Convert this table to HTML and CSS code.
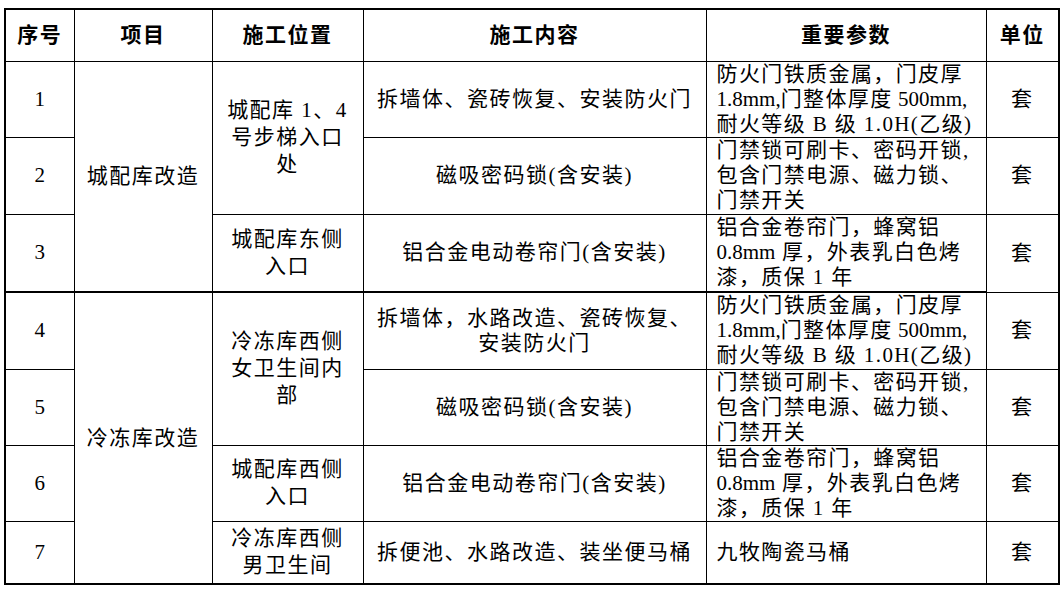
FILE: index.html
```html
<!DOCTYPE html>
<html lang="zh-CN">
<head>
<meta charset="utf-8">
<title>施工清单</title>
<link rel="stylesheet" href="styles.css">
</head>
<body>
<table class="sheet">
  <colgroup>
    <col class="c-no">
    <col class="c-item">
    <col class="c-loc">
    <col class="c-work">
    <col class="c-param">
    <col class="c-unit">
  </colgroup>
  <thead>
    <tr class="r-head">
      <th>序号</th>
      <th>项目</th>
      <th>施工位置</th>
      <th>施工内容</th>
      <th>重要参数</th>
      <th>单位</th>
    </tr>
  </thead>
  <tbody>
    <tr class="r1">
      <td class="num">1</td>
      <td rowspan="3" class="item">城配库改造</td>
      <td rowspan="2" class="loc">城配库 1、4<br>号步梯入口<br>处</td>
      <td class="work">拆墙体、瓷砖恢复、安装防火门</td>
      <td class="param">防火门铁质金属，门皮厚<br><span class="lat">1.8mm,</span>门整体厚度<span class="lat"> 500mm,</span><br>耐火等级 B 级 1.0H(乙级)</td>
      <td class="unit">套</td>
    </tr>
    <tr class="r2">
      <td class="num">2</td>
      <td class="work">磁吸密码锁(含安装)</td>
      <td class="param">门禁锁可刷卡、密码开锁,<br>包含门禁电源、磁力锁、<br>门禁开关</td>
      <td class="unit">套</td>
    </tr>
    <tr class="r3">
      <td class="num">3</td>
      <td class="loc">城配库东侧<br>入口</td>
      <td class="work">铝合金电动卷帘门(含安装)</td>
      <td class="param">铝合金卷帘门，蜂窝铝<br><span class="lat">0.8mm</span> 厚，外表乳白色烤<br>漆，质保 1 年</td>
      <td class="unit">套</td>
    </tr>
    <tr class="r4 split">
      <td class="num">4</td>
      <td rowspan="4" class="item">冷冻库改造</td>
      <td rowspan="2" class="loc">冷冻库西侧<br>女卫生间内<br>部</td>
      <td class="work">拆墙体，水路改造、瓷砖恢复、<br>安装防火门</td>
      <td class="param">防火门铁质金属，门皮厚<br><span class="lat">1.8mm,</span>门整体厚度<span class="lat"> 500mm,</span><br>耐火等级 B 级 1.0H(乙级)</td>
      <td class="unit thin">套</td>
    </tr>
    <tr class="r5">
      <td class="num">5</td>
      <td class="work">磁吸密码锁(含安装)</td>
      <td class="param">门禁锁可刷卡、密码开锁,<br>包含门禁电源、磁力锁、<br>门禁开关</td>
      <td class="unit">套</td>
    </tr>
    <tr class="r6">
      <td class="num">6</td>
      <td class="loc">城配库西侧<br>入口</td>
      <td class="work">铝合金电动卷帘门(含安装)</td>
      <td class="param">铝合金卷帘门，蜂窝铝<br><span class="lat">0.8mm</span> 厚，外表乳白色烤<br>漆，质保 1 年</td>
      <td class="unit">套</td>
    </tr>
    <tr class="r7">
      <td class="num">7</td>
      <td class="loc">冷冻库西侧<br>男卫生间</td>
      <td class="work">拆便池、水路改造、装坐便马桶</td>
      <td class="param">九牧陶瓷马桶</td>
      <td class="unit">套</td>
    </tr>
  </tbody>
</table>
</body>
</html>
```
FILE: styles.css
```css
html, body {
  margin: 0;
  background: #ffffff;
}

body {
  padding: 8px 0 0 4px;
  font-family: "Liberation Serif", "Noto Sans CJK SC", serif;
  color: #000000;
}

.sheet {
  border-collapse: collapse;
  table-layout: fixed;
  width: 1054px;
  border: 2px solid #000;
  font-size: 21px;
  letter-spacing: 1.5px;
}

.c-no { width: 69px; }
.c-item { width: 138px; }
.c-loc { width: 151px; }
.c-work { width: 343px; }
.c-param { width: 280px; }
.c-unit { width: 73px; }

.sheet th,
.sheet td {
  border: 1px solid #000;
  padding: 0;
  text-align: center;
  vertical-align: middle;
  font-weight: 400;
  line-height: 25px;
  overflow: hidden;
  white-space: nowrap;
}

.sheet th {
  font-weight: 700;
  font-size: 21px;
}

.r-head { height: 52px; }
.r1 { height: 76px; }
.r2 { height: 77px; }
.r3 { height: 78px; }
.r4 { height: 77px; }
.r5 { height: 75px; }
.r6 { height: 76px; }
.r7 { height: 63px; }

.split td {
  border-top-width: 2px;
}

.split td.thin {
  border-top-width: 1px;
}

.sheet td.loc {
  line-height: 27px;
}

.sheet td.param {
  text-align: left;
  padding-left: 10px;
  letter-spacing: 1.4px;
}

.sheet td.param .lat {
  letter-spacing: 0;
}

.sheet td.num {
  letter-spacing: 0;
}
```
